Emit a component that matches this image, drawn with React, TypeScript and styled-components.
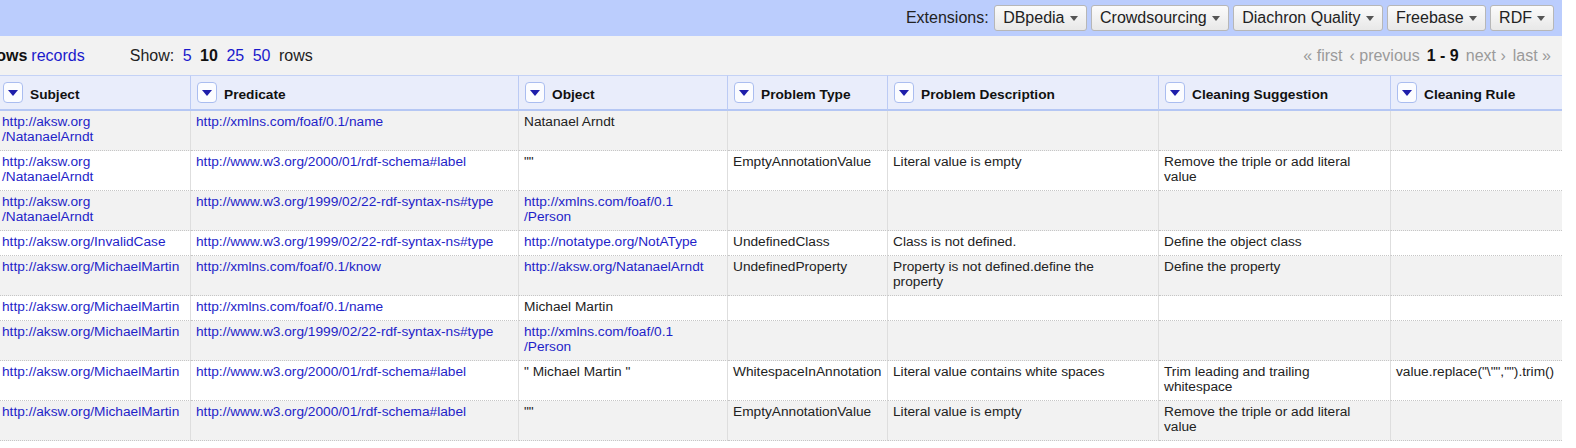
import styled, { createGlobalStyle } from "styled-components";

const GlobalStyle = createGlobalStyle`
	body {
		margin: 0;
		background: #fff;
		font-family: "Liberation Sans", Arial, sans-serif;
		color: #222;
	}
`;

const Viewport = styled.div`
	width: 1562px;
	overflow: hidden;
`;

// the page is scrolled a few pixels to the right in the screenshot
const Page = styled.div`
	width: 1565px;
	margin-left: -3px;
`;

const TopBar = styled.div`
	height: 36px;
	background: #bbcdfd;
	display: flex;
	align-items: center;
	justify-content: flex-end;
	gap: 4px;
	padding-right: 8px;
	font-size: 16px;
`;

const ExtLabel = styled.span`
	margin-right: 1px;
	color: #222;
`;

const MenuButton = styled.button`
	height: 26px;
	display: flex;
	align-items: center;
	gap: 5px;
	padding: 0 8px 0 8.5px;
	font-family: inherit;
	font-size: 16px;
	color: #222;
	border: 1px solid #b7b7b7;
	border-radius: 3px;
	background: linear-gradient(#fbfbfb, #e8e8e8);
`;

const ViewBar = styled.div`
	height: 39px;
	background: #f2f2f2;
	display: flex;
	align-items: center;
	justify-content: space-between;
	padding-right: 11px;
	font-size: 16px;
`;

const ModeGroup = styled.div`
	display: flex;
	align-items: center;
	gap: 4px;
	margin-left: -7px;
`;

const ShowGroup = styled.div`
	display: flex;
	align-items: center;
	gap: 8.5px;
	margin-left: 45px;
	margin-right: auto;
`;

const Pager = styled.div`
	display: flex;
	align-items: center;
	gap: 7px;
`;

const Current = styled.span`
	font-weight: bold;
	color: #111;
`;

const Action = styled.span`
	color: #1a1acc;
`;

const Muted = styled.span`
	color: #9a9a9a;
`;

const Grid = styled.table`
	width: 1565px;
	table-layout: fixed;
	border-collapse: separate;
	border-spacing: 0;
	font-size: 13.7px;
`;

const HeadCell = styled.th`
	padding: 0 6px;
	background: #e9edfb;
	border-top: 1px solid #c4d2f6;
	border-bottom: 2px solid #b5c7f4;
	border-right: 1px solid #bccbf4;
	text-align: left;
	&:last-child {
		border-right: none;
	}
`;

const HeadInner = styled.div`
	height: 33px;
	display: flex;
	align-items: center;
	gap: 7px;
	font-weight: bold;
	color: #111;
	white-space: nowrap;
`;

const HeadLabel = styled.span`
	padding-top: 3px;
`;

const DropButton = styled.span`
	width: 18px;
	height: 19px;
	flex: none;
	display: flex;
	align-items: center;
	justify-content: center;
	border: 1px solid #aabdf0;
	border-radius: 4px;
	background: #fbfcff;
`;

const Row = styled.tr<{ odd: boolean }>`
	background: ${props => (props.odd ? "#f2f2f2" : "#fff")};
`;

const Cell = styled.td`
	padding: 3px 5px 6px;
	line-height: 15px;
	vertical-align: top;
	white-space: pre-line;
	border-bottom: 1px dotted #c6c6c6;
	border-right: 1px solid #dedede;
	&:last-child {
		border-right: none;
	}
`;

const Link = styled.span`
	color: #1f1fc9;
`;

const columns = [
	{ name: "Subject", width: 194 },
	{ name: "Predicate", width: 328 },
	{ name: "Object", width: 209 },
	{ name: "Problem Type", width: 160 },
	{ name: "Problem Description", width: 271 },
	{ name: "Cleaning Suggestion", width: 232 },
	{ name: "Cleaning Rule", width: 171 },
];

type Value = { text: string; link?: boolean };

const l = (text: string): Value => ({ text, link: true });
const t = (text: string): Value => ({ text });

const rows: Value[][] = [
	[l("http://aksw.org\n/NatanaelArndt"), l("http://xmlns.com/foaf/0.1/name"), t("Natanael Arndt"), t(""), t(""), t(""), t("")],
	[
		l("http://aksw.org\n/NatanaelArndt"),
		l("http://www.w3.org/2000/01/rdf-schema#label"),
		t('""'),
		t("EmptyAnnotationValue"),
		t("Literal value is empty"),
		t("Remove the triple or add literal\nvalue"),
		t(""),
	],
	[
		l("http://aksw.org\n/NatanaelArndt"),
		l("http://www.w3.org/1999/02/22-rdf-syntax-ns#type"),
		l("http://xmlns.com/foaf/0.1\n/Person"),
		t(""),
		t(""),
		t(""),
		t(""),
	],
	[
		l("http://aksw.org/InvalidCase"),
		l("http://www.w3.org/1999/02/22-rdf-syntax-ns#type"),
		l("http://notatype.org/NotAType"),
		t("UndefinedClass"),
		t("Class is not defined."),
		t("Define the object class"),
		t(""),
	],
	[
		l("http://aksw.org/MichaelMartin"),
		l("http://xmlns.com/foaf/0.1/know"),
		l("http://aksw.org/NatanaelArndt"),
		t("UndefinedProperty"),
		t("Property is not defined.define the\nproperty"),
		t("Define the property"),
		t(""),
	],
	[l("http://aksw.org/MichaelMartin"), l("http://xmlns.com/foaf/0.1/name"), t("Michael Martin"), t(""), t(""), t(""), t("")],
	[
		l("http://aksw.org/MichaelMartin"),
		l("http://www.w3.org/1999/02/22-rdf-syntax-ns#type"),
		l("http://xmlns.com/foaf/0.1\n/Person"),
		t(""),
		t(""),
		t(""),
		t(""),
	],
	[
		l("http://aksw.org/MichaelMartin"),
		l("http://www.w3.org/2000/01/rdf-schema#label"),
		t('" Michael Martin "'),
		t("WhitespaceInAnnotation"),
		t("Literal value contains white spaces"),
		t("Trim leading and trailing\nwhitespace"),
		t('value.replace("\\"","").trim()'),
	],
	[
		l("http://aksw.org/MichaelMartin"),
		l("http://www.w3.org/2000/01/rdf-schema#label"),
		t('""'),
		t("EmptyAnnotationValue"),
		t("Literal value is empty"),
		t("Remove the triple or add literal\nvalue"),
		t(""),
	],
];

const extensions = ["DBpedia", "Crowdsourcing", "Diachron Quality", "Freebase", "RDF"];

const SmallArrow = () => (
	<svg width="8" height="5" viewBox="0 0 8 5">
		<polygon points="0,0 8,0 4,5" fill="#555" />
	</svg>
);

const HeadArrow = () => (
	<svg width="10" height="6" viewBox="0 0 10 6">
		<polygon points="0,0 10,0 5,6" fill="#1d1daa" />
	</svg>
);

const App = () => {
	return (
		<Viewport>
			<GlobalStyle />
			<Page>
				<TopBar>
					<ExtLabel>Extensions:</ExtLabel>
					{extensions.map(name => (
						<MenuButton key={name}>
							{name}
							<SmallArrow />
						</MenuButton>
					))}
				</TopBar>
				<ViewBar>
					<ModeGroup>
						<Current>rows</Current>
						<Action>records</Action>
					</ModeGroup>
					<ShowGroup>
						<span>Show:</span>
						<Action>5</Action>
						<Current>10</Current>
						<Action>25</Action>
						<Action>50</Action>
						<span>rows</span>
					</ShowGroup>
					<Pager>
						<Muted>« first</Muted>
						<Muted>‹ previous</Muted>
						<Current>1 - 9</Current>
						<Muted>next ›</Muted>
						<Muted>last »</Muted>
					</Pager>
				</ViewBar>
				<Grid>
					<colgroup>
						{columns.map(c => (
							<col key={c.name} style={{ width: c.width }} />
						))}
					</colgroup>
					<thead>
						<tr>
							{columns.map(c => (
								<HeadCell key={c.name}>
									<HeadInner>
										<DropButton>
											<HeadArrow />
										</DropButton>
										<HeadLabel>{c.name}</HeadLabel>
									</HeadInner>
								</HeadCell>
							))}
						</tr>
					</thead>
					<tbody>
						{rows.map((row, i) => (
							<Row key={i} odd={i % 2 === 0}>
								{row.map((v, j) => (
									<Cell key={j}>{v.link ? <Link>{v.text}</Link> : v.text}</Cell>
								))}
							</Row>
						))}
					</tbody>
				</Grid>
			</Page>
		</Viewport>
	);
};

export default App;
